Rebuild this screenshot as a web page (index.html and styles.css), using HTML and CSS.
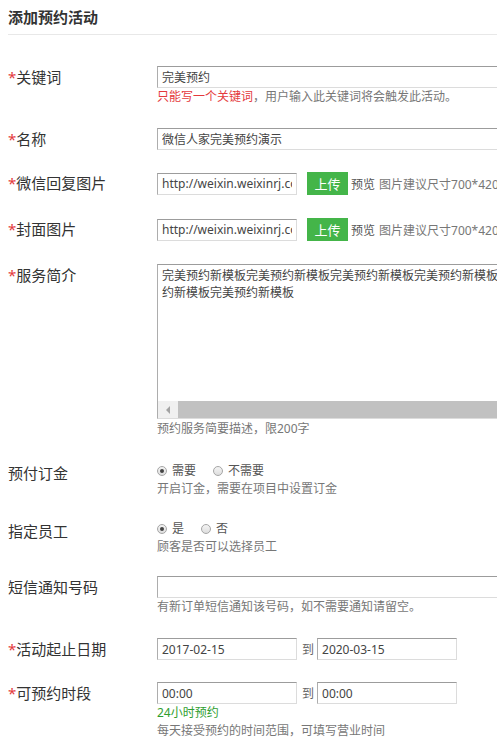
FILE: index.html
```
<!DOCTYPE html>
<html lang="zh-CN">
<head>
  <meta charset="UTF-8">
  <meta name="viewport" content="width=device-width, initial-scale=1.0">
  <title>添加预约活动</title>
  <link rel="stylesheet" href="styles.css">
</head>
<body>
  <h3 class="page-title">添加预约活动</h3>

  <form class="form">
    <div class="row">
      <label class="label"><i class="req">*</i>关键词</label>
      <div class="field">
        <input type="text" class="text long" value="完美预约">
        <p class="tip"><span class="warn">只能写一个关键词</span>，用户输入此关键词将会触发此活动。</p>
      </div>
    </div>

    <div class="row">
      <label class="label"><i class="req">*</i>名称</label>
      <div class="field">
        <input type="text" class="text long" value="微信人家完美预约演示">
      </div>
    </div>

    <div class="row row-upload">
      <label class="label"><i class="req">*</i>微信回复图片</label>
      <div class="field inline">
        <input type="text" class="text short" value="http://weixin.weixinrj.com/upload/reply.jpg">
        <button type="button" class="btn-upload">上传</button>
        <span class="preview">预览</span>
        <span class="size-tip">图片建议尺寸700*420</span>
      </div>
    </div>

    <div class="row row-upload">
      <label class="label"><i class="req">*</i>封面图片</label>
      <div class="field inline">
        <input type="text" class="text short" value="http://weixin.weixinrj.com/upload/cover.jpg">
        <button type="button" class="btn-upload">上传</button>
        <span class="preview">预览</span>
        <span class="size-tip">图片建议尺寸700*420</span>
      </div>
    </div>

    <div class="row row-intro">
      <label class="label"><i class="req">*</i>服务简介</label>
      <div class="field">
        <div class="textarea">
          <div class="textarea-text">完美预约新模板完美预约新模板完美预约新模板完美预约新模板完美预约新模板完美预约新模板</div>
          <div class="hscroll">
            <span class="hscroll-arrow"></span>
            <span class="hscroll-thumb"></span>
          </div>
        </div>
        <p class="tip tip-intro">预约服务简要描述，限200字</p>
      </div>
    </div>

    <div class="row">
      <label class="label">预付订金</label>
      <div class="field">
        <div class="radios">
          <span class="option"><i class="radio checked"></i>需要</span>
          <span class="option"><i class="radio"></i>不需要</span>
        </div>
        <p class="tip">开启订金，需要在项目中设置订金</p>
      </div>
    </div>

    <div class="row row-staff">
      <label class="label">指定员工</label>
      <div class="field">
        <div class="radios">
          <span class="option"><i class="radio checked"></i>是</span>
          <span class="option"><i class="radio"></i>否</span>
        </div>
        <p class="tip">顾客是否可以选择员工</p>
      </div>
    </div>

    <div class="row">
      <label class="label">短信通知号码</label>
      <div class="field">
        <input type="text" class="text long" value="">
        <p class="tip">有新订单短信通知该号码，如不需要通知请留空。</p>
      </div>
    </div>

    <div class="row">
      <label class="label"><i class="req">*</i>活动起止日期</label>
      <div class="field inline">
        <input type="text" class="text short" value="2017-02-15">
        <span class="to">到</span>
        <input type="text" class="text short" value="2020-03-15">
      </div>
    </div>

    <div class="row">
      <label class="label"><i class="req">*</i>可预约时段</label>
      <div class="field">
        <div class="inline">
          <input type="text" class="text short" value="00:00">
          <span class="to">到</span>
          <input type="text" class="text short" value="00:00">
        </div>
        <p class="tip ok">24小时预约</p>
        <p class="tip">每天接受预约的时间范围，可填写营业时间</p>
      </div>
    </div>
  </form>
</body>
</html>
```

FILE: styles.css
```
* {
  box-sizing: border-box;
}
body {
  margin: 0;
  padding: 0 0 0 8px;
  font-family: "Noto Sans", "Noto Sans CJK SC", sans-serif;
  color: #333;
  background: #fff;
  overflow: hidden;
}
.page-title {
  margin: 0 0 31px;
  font-size: 15px;
  font-weight: bold;
  line-height: 34px;
  border-bottom: 1px solid #e8e8e8;
}
.row {
  display: flex;
  align-items: flex-start;
  margin-bottom: 22px;
}
.row-upload {
  margin-bottom: 23px;
}
.row-intro {
  margin-bottom: 24px;
}
.row-staff {
  margin-bottom: 20px;
}
.label {
  flex: none;
  width: 149px;
  font-size: 15px;
  line-height: 22px;
  white-space: nowrap;
}
.req {
  font-style: normal;
  color: #e4393c;
}
.field {
  flex: none;
  font-size: 12px;
}
.inline {
  display: flex;
  align-items: center;
}
.text {
  display: block;
  height: 22px;
  padding: 0 4px;
  border: 1px solid;
  border-color: #9c9c9c #dcdcdc #dcdcdc #adadad;
  font: 12px "Noto Sans", "Noto Sans CJK SC", sans-serif;
  color: #444;
  background: #fff;
  outline: none;
}
.long {
  width: 420px;
}
.short {
  width: 140px;
}
.tip {
  margin: 0;
  font-size: 12px;
  line-height: 18px;
  color: #777;
}
.warn {
  color: #e4393c;
}
.ok {
  color: #2f9e2f;
}
.btn-upload {
  width: 41px;
  height: 23px;
  margin-left: 10px;
  padding: 0;
  border: none;
  background: #44b549;
  color: #fff;
  font: 13px "Noto Sans", "Noto Sans CJK SC", sans-serif;
  cursor: pointer;
}
.preview {
  margin-left: 3px;
  color: #555;
}
.size-tip {
  margin-left: 4px;
  color: #777;
  white-space: nowrap;
}
.to {
  margin: 0 3px 0 5px;
  color: #666;
}

/* 服务简介：带横向滚动条的文本框 */
.textarea {
  display: flex;
  flex-direction: column;
  width: 385px;
  height: 155px;
  border: 1px solid;
  border-color: #9c9c9c #dcdcdc #dcdcdc #adadad;
}
.textarea-text {
  flex: 1;
  padding: 2px 4px;
  font-size: 12px;
  line-height: 17px;
  color: #444;
}
.hscroll {
  display: flex;
  height: 17px;
  background: #f0f0f0;
}
.hscroll-arrow {
  flex: none;
  width: 20px;
  position: relative;
}
.hscroll-arrow::before {
  content: "";
  position: absolute;
  left: 8px;
  top: 5px;
  border-style: solid;
  border-width: 4px 4px 4px 0;
  border-color: transparent #a3a3a3 transparent transparent;
}
.hscroll-thumb {
  flex: 1;
  background: #c1c1c1;
}
.tip-intro {
  margin-top: 1px;
}

/* 单选 */
.radios {
  display: flex;
  align-items: center;
  line-height: 18px;
  color: #555;
}
.option {
  display: flex;
  align-items: center;
  margin-right: 17px;
}
.radio {
  width: 10px;
  height: 10px;
  margin-right: 5px;
  border: 1px solid #a6a6a6;
  border-radius: 50%;
  background: linear-gradient(#f4f4f4, #dedede);
  position: relative;
}
.radio.checked::after {
  content: "";
  position: absolute;
  left: 2px;
  top: 2px;
  width: 4px;
  height: 4px;
  border-radius: 50%;
  background: #444;
}
```
